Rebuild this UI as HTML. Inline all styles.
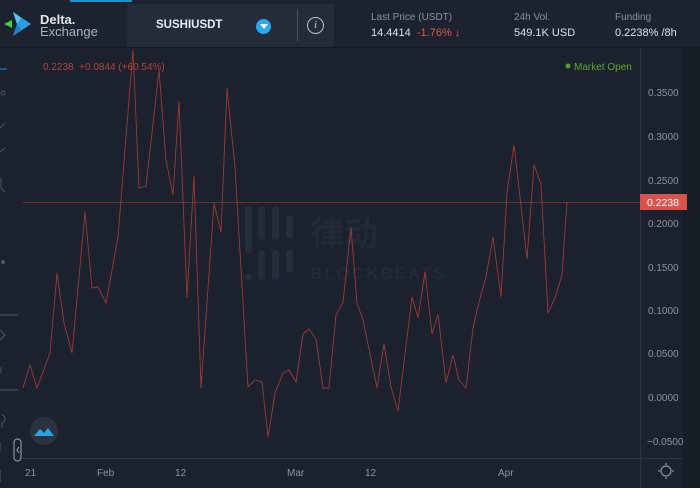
<!DOCTYPE html>
<html><head><meta charset="utf-8"><style>
*{margin:0;padding:0;box-sizing:border-box}
body{width:700px;height:488px;overflow:hidden;background:#1b212d;font-family:"Liberation Sans","Noto Sans CJK SC",sans-serif;position:relative}
.hdr{position:absolute;left:0;top:0;width:700px;height:48px;background:#1c232e;border-bottom:1px solid #121720}
.t{position:absolute;white-space:nowrap}
</style></head><body>
<div class="hdr"></div>
<div style="position:absolute;left:70px;top:0;width:62px;height:2px;background:#1e8fd0"></div>
<svg class="t" style="left:3px;top:10px" width="32" height="30" viewBox="0 0 32 30">
<polygon points="10,2 28,14 10,26 14,14" fill="#2a9fe0"/><polygon points="10,2 18,8 14,14" fill="#5cc4f2"/><polygon points="14,14 18,20 10,26" fill="#1f7fc0"/><polygon points="1,14 9,10 9,18" fill="#3cd03c"/></svg>
<div class="t" style="left:40px;top:12px;color:#e6e9ee;font-size:13px;font-weight:bold">Delta.</div>
<div class="t" style="left:40px;top:24px;color:#aab2bd;font-size:13px">Exchange</div>
<div style="position:absolute;left:127px;top:4px;width:207px;height:43px;background:#242c39"></div>
<div class="t" style="left:156px;top:19px;color:#e8ebef;font-size:11.5px;font-weight:bold">SUSHIUSDT</div>
<div style="position:absolute;left:256px;top:19px;width:15px;height:15px;border-radius:50%;background:#27a8f0"></div>
<div style="position:absolute;left:259.5px;top:24px;border-left:4px solid transparent;border-right:4px solid transparent;border-top:5px solid #fff"></div>
<div style="position:absolute;left:297px;top:9px;width:1px;height:32px;background:#46505e"></div>
<div style="position:absolute;left:307px;top:17px;width:17px;height:17px;border-radius:50%;border:1.3px solid #b8c0ca;color:#c8ced6;font-size:11px;font-style:italic;text-align:center;line-height:15px;font-family:'Liberation Serif',serif">i</div>
<div class="t" style="left:371px;top:12px;color:#8a929e;font-size:10px">Last Price (USDT)</div>
<div class="t" style="left:371px;top:27px;color:#dfe3e8;font-size:11px">14.4414 <span style="color:#e0584e">&nbsp;-1.76% ↓</span></div>
<div class="t" style="left:514px;top:12px;color:#8a929e;font-size:10px">24h Vol.</div>
<div class="t" style="left:514px;top:27px;color:#dfe3e8;font-size:11px">549.1K USD</div>
<div class="t" style="left:615px;top:12px;color:#8a929e;font-size:10px">Funding</div>
<div class="t" style="left:615px;top:27px;color:#dfe3e8;font-size:11px">0.2238% /8h</div>

<svg class="t" style="left:0;top:49px" width="700" height="439" viewBox="0 49 700 439">
<rect x="683" y="49" width="17" height="439" fill="#181e28"/>
<line x1="640.5" y1="49" x2="640.5" y2="488" stroke="#2c3440"/>
<line x1="20" y1="458.5" x2="683" y2="458.5" stroke="#2c3440"/>
<line x1="0" y1="69" x2="7" y2="69" stroke="#1e8fd0" stroke-width="1"/>
<g stroke="#5d6672" fill="none" stroke-width="1" opacity=".8">
<line x1="0" y1="315" x2="18" y2="315"/><line x1="0" y1="390" x2="18" y2="390"/>
<circle cx="3" cy="93" r="2"/><path d="M0 128 L5 123 M0 152 L5 148 M1 178 v10 l4 4"/><circle cx="3" cy="262" r="1.5" fill="#5d6672"/>
<path d="M0 330 l5 5 l-5 5 M1 373 v-6 M2 415 a3 4 0 0 1 0 8 v5 M0 442 v10 M0 470 v12"/>
</g>
<g fill="#242d3b">
<rect x="245" y="206" width="7" height="48" rx="3.5"/><circle cx="248.5" cy="277" r="3.5"/>
<rect x="258" y="206" width="7" height="34" rx="3.5"/><rect x="258" y="250" width="7" height="30" rx="3.5"/>
<rect x="272" y="206" width="7" height="34" rx="3.5"/><rect x="272" y="250" width="7" height="30" rx="3.5"/>
<rect x="286" y="215" width="7" height="24" rx="3.5"/><rect x="286" y="249" width="7" height="24" rx="3.5"/>
</g>
<text x="310" y="246" font-size="34" fill="#222a37" font-family="Noto Sans CJK SC" font-weight="bold">律动</text>
<text x="310" y="279" font-size="17" fill="#222a37" font-weight="bold" letter-spacing="2">BLOCKBEATS</text>
<line x1="23" y1="202.5" x2="640" y2="202.5" stroke="#7a3434" stroke-width="1" opacity=".8"/>
<polyline fill="none" stroke="#9c3a37" stroke-width="0.9" points="23,388 30,365 37,388 50,353 57,273 64,323 72,353 85,212 92,288 98,287 106,303 118,237 133,50 139,188 146,186 159,70 166,160 173,195 179,101 187,298 194,176 201,388 214,203 221,232 227,88 235,167 248,387 255,380 262,382 268,437 275,393 283,373 289,370 296,382 303,334 309,329 316,339 323,388 329,388 336,315 343,302 351,227 357,303 363,320 377,388 384,344 391,387 398,411 412,297 418,318 425,272 432,334 438,314 446,383 453,355 459,380 466,388 473,328 479,302 486,277 493,237 501,297 507,192 514,145 520,197 527,259 534,165 541,184 548,313 555,298 562,275 567,202"/>
<text x="43" y="70" font-size="10" fill="#b8443e">0.2238 &#160;+0.0844 (+60.54%)</text>
<circle cx="568" cy="66" r="2.5" fill="#4fa02a"/>
<text x="574" y="70" font-size="10" fill="#5ca82f">Market Open</text>
<g font-size="10" fill="#8c949f">
<text x="648" y="96">0.3500</text><text x="648" y="140">0.3000</text><text x="648" y="184">0.2500</text><text x="648" y="227">0.2000</text><text x="648" y="271">0.1500</text><text x="648" y="314">0.1000</text><text x="648" y="357">0.0500</text><text x="648" y="401">0.0000</text><text x="647" y="445">−0.0500</text>
<text x="25" y="476">21</text><text x="97" y="476">Feb</text><text x="175" y="476">12</text><text x="287" y="476">Mar</text><text x="365" y="476">12</text><text x="498" y="476">Apr</text>
</g>
<rect x="640" y="194" width="47" height="16" fill="#d8534c"/>
<text x="647" y="206" font-size="10.5" fill="#fff">0.2238</text>
<circle cx="666" cy="471" r="5" fill="none" stroke="#8c949f" stroke-width="1.2"/>
<g stroke="#8c949f" stroke-width="1.2"><line x1="666" y1="463" x2="666" y2="465"/><line x1="666" y1="477" x2="666" y2="479"/><line x1="658" y1="471" x2="660" y2="471"/><line x1="672" y1="471" x2="674" y2="471"/></g>
<circle cx="44" cy="431" r="14" fill="#2b333f"/>
<path d="M34 436 l6-7 4 4 4-5 6 8 z" fill="#29a3e6"/>
<rect x="14" y="439" width="7" height="22" rx="3.5" fill="none" stroke="#9aa2ad"/>
<path d="M19 447 l-2 3 2 3" stroke="#9aa2ad" fill="none"/>
</svg>
</body></html>
